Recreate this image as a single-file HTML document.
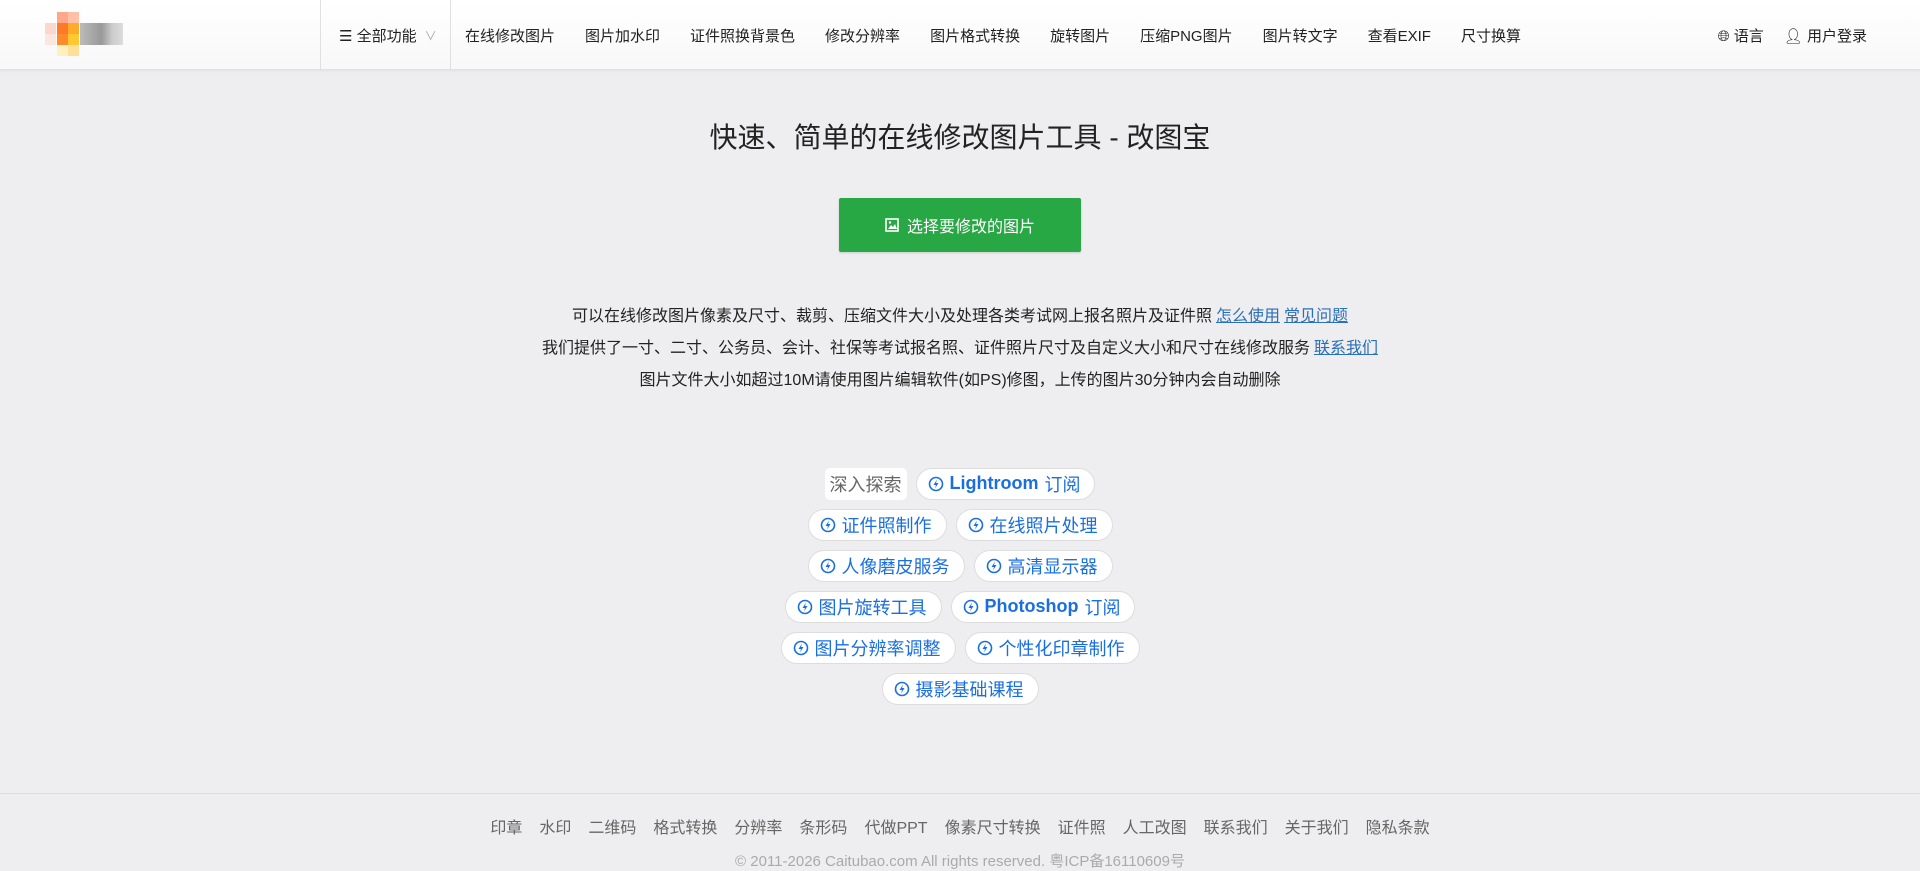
<!DOCTYPE html>
<html><head><meta charset="utf-8"><style>
*{box-sizing:border-box;margin:0;padding:0}
body{width:1920px;height:860px;overflow:hidden;background:#eeeef0;font-family:"Liberation Sans","Noto Sans CJK SC",sans-serif;color:#333}
.hd{height:70px;background:linear-gradient(#fff,#f8f8f9);border-bottom:1px solid #e2e2e6;box-shadow:0 1px 3px rgba(0,0,0,.06);position:relative}
.logo{position:absolute;left:45px;top:12px}
.px{position:absolute;width:11px;height:11px}
.nav{position:absolute;left:320px;top:0;height:70px;display:flex;align-items:center;font-size:15px;color:#222}
.all{height:70px;border-left:1px solid #e0e0e0;border-right:1px solid #e0e0e0;width:131px;display:flex;align-items:center;padding-left:18px}
.nav a{padding:0 15px;color:#222;text-decoration:none}
.rt{position:absolute;right:53px;top:0;height:70px;display:flex;align-items:center;font-size:15px;gap:20px;color:#222}
h1{font-weight:normal;font-size:28px;text-align:center;margin-top:50px;color:#222;line-height:36px}
.btn{display:flex;align-items:center;justify-content:center;gap:8px;margin:42px auto 0;width:242px;height:54px;background:#28a745;color:#fff;font-size:16px;border-radius:2px;box-shadow:0 1px 2px rgba(0,0,0,.15)}
.desc{text-align:center;font-size:16px;line-height:32px;margin-top:49px;color:#222}
.desc a{color:#2a6fb8;text-decoration:underline;margin-left:4px}
.tags{margin-top:66px}
.row{display:flex;justify-content:center;gap:9px;height:41px;align-items:center}
.p{height:32px;border:1px solid #ddd;background:#fff;border-radius:16px;padding:0 14px 0 11px;display:flex;align-items:center;gap:6px;font-size:18px;color:#1a6fe0}
.p b{font-weight:bold}
.p svg{width:16px;height:16px}
.ex{height:32px;background:#fff;border-radius:5px;padding:0 5px;font-size:18px;color:#666;display:flex;align-items:center}
.ft{position:absolute;top:793px;left:0;width:1920px;border-top:1px solid #dcdce0}
.fl{display:flex;justify-content:center;gap:17px;font-size:16px;color:#666;margin-top:20px}
.cp{text-align:center;font-size:15px;color:#aaa;margin-top:12px}
</style></head><body>
<div class="hd">
 <div class="logo">
  <div class="px" style="left:12px;top:0;background:#ffa78a"></div><div class="px" style="left:23px;top:0;background:#ffc0a8"></div>
  <div class="px" style="left:0;top:11px;background:#fbd8cc"></div><div class="px" style="left:12px;top:11px;background:#ff7a26"></div><div class="px" style="left:23px;top:11px;background:#ffab2a"></div>
  <div class="px" style="left:0;top:22px;background:#fde6de"></div><div class="px" style="left:12px;top:22px;background:#ff8a2a"></div><div class="px" style="left:23px;top:22px;background:#ffc830"></div>
  <div class="px" style="left:12px;top:33px;background:#fff0c0"></div><div class="px" style="left:23px;top:33px;background:#ffe09a"></div>
  <div style="position:absolute;left:35px;top:11px;width:43px;height:22px;background:linear-gradient(90deg,#bbb,#aaa,#999,#ccc,#ddd)"></div>
 </div>
 <div class="nav">
  <div class="all">☰&nbsp;全部功能 <span style="color:#aaa;font-size:12px;margin-left:8px">∨</span></div>
  <a style="padding-left:14px">在线修改图片</a><a>图片加水印</a><a>证件照换背景色</a><a>修改分辨率</a><a>图片格式转换</a><a>旋转图片</a><a>压缩PNG图片</a><a>图片转文字</a><a>查看EXIF</a><a>尺寸换算</a>
 </div>
 <div class="rt"><span>🌐︎ 语言</span><span>👤︎ 用户登录</span></div>
</div>
<h1>快速、简单的在线修改图片工具 - 改图宝</h1>
<div class="btn"><svg width="14" height="14" viewBox="0 0 14 14"><rect x="1" y="1" width="12" height="12" fill="none" stroke="#fff" stroke-width="1.6"/><path d="M3 11l3-4 2 2 2-3 2 5z" fill="#fff"/><circle cx="5" cy="4.5" r="1.2" fill="#fff"/></svg>选择要修改的图片</div>
<div class="desc">
 <div>可以在线修改图片像素及尺寸、裁剪、压缩文件大小及处理各类考试网上报名照片及证件照<a>怎么使用</a><a>常见问题</a></div>
 <div>我们提供了一寸、二寸、公务员、会计、社保等考试报名照、证件照片尺寸及自定义大小和尺寸在线修改服务<a>联系我们</a></div>
 <div>图片文件大小如超过10M请使用图片编辑软件(如PS)修图，上传的图片30分钟内会自动删除</div>
</div>
<svg style="display:none"><symbol id="i" viewBox="0 0 16 16"><circle cx="8" cy="8" r="6.5" fill="none" stroke="#1a6fe0" stroke-width="1.6"/><path d="M9 3.5L5.5 9H8l-1 3.5L10.5 7H8z" fill="#1a6fe0"/></symbol></svg>
<div class="tags">
 <div class="row"><span class="ex">深入探索</span><span class="p"><svg><use href="#i"/></svg><b>Lightroom</b> 订阅</span></div>
 <div class="row"><span class="p"><svg><use href="#i"/></svg>证件照制作</span><span class="p"><svg><use href="#i"/></svg>在线照片处理</span></div>
 <div class="row"><span class="p"><svg><use href="#i"/></svg>人像磨皮服务</span><span class="p"><svg><use href="#i"/></svg>高清显示器</span></div>
 <div class="row"><span class="p"><svg><use href="#i"/></svg>图片旋转工具</span><span class="p"><svg><use href="#i"/></svg><b>Photoshop</b> 订阅</span></div>
 <div class="row"><span class="p"><svg><use href="#i"/></svg>图片分辨率调整</span><span class="p"><svg><use href="#i"/></svg>个性化印章制作</span></div>
 <div class="row"><span class="p"><svg><use href="#i"/></svg>摄影基础课程</span></div>
</div>
<div class="ft">
 <div class="fl"><span>印章</span><span>水印</span><span>二维码</span><span>格式转换</span><span>分辨率</span><span>条形码</span><span>代做PPT</span><span>像素尺寸转换</span><span>证件照</span><span>人工改图</span><span>联系我们</span><span>关于我们</span><span>隐私条款</span></div>
 <div class="cp">© 2011-2026 Caitubao.com All rights reserved. 粤ICP备16110609号</div>
</div>
</body></html>
